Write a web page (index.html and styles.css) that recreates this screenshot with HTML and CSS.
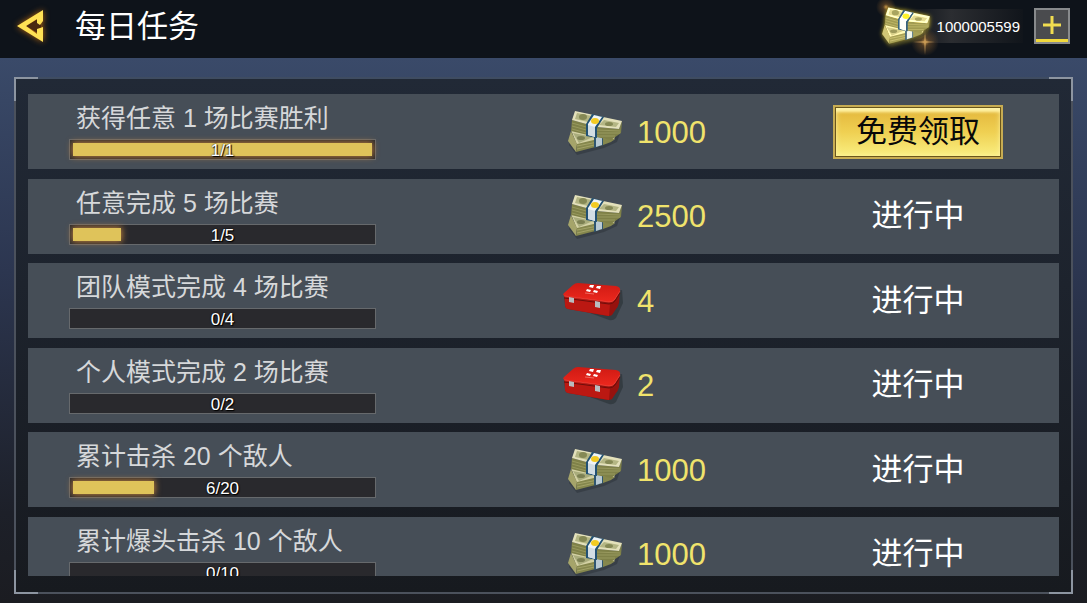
FILE: index.html
```html
<!DOCTYPE html>
<html lang="zh-CN">
<head>
  <meta charset="UTF-8" />
  <meta name="viewport" content="width=device-width, initial-scale=1.0"/>
  <title>每日任务</title>
  <link rel="stylesheet" href="styles.css">
</head>
<body>
  <!-- Shared icons -->
  <svg class="icon-defs" aria-hidden="true">
    <defs>
      <linearGradient id="lid" x1="0" y1="0" x2="0" y2="1">
        <stop offset="0" stop-color="#cf1a13"/>
        <stop offset="1" stop-color="#ec281e"/>
      </linearGradient>
      <radialGradient id="spark">
        <stop offset="0" stop-color="#e0a850" stop-opacity=".9"/>
        <stop offset=".3" stop-color="#a87030" stop-opacity=".4"/>
        <stop offset="1" stop-color="#a87030" stop-opacity="0"/>
      </radialGradient>
    </defs>
    <symbol id="cash" viewBox="0 1 70 56">
      <path d="M12 30 L60 30 L57 39 L44 45 L17 52 L9 42z" fill="#20262a" opacity=".35"/>
      <!-- lower bundle -->
      <path d="M11 27 L36 32 L55 33 L54 37 L17 42z" fill="#d3d1a4"/>
      <path d="M13 30 L33 34 L19 40z" fill="#a9ac7c"/>
      <ellipse cx="21" cy="35" rx="4" ry="2" fill="#7c8052"/>
      <path d="M11 28 L17 41 L16 49 L8 38z" fill="#a5a46a"/>
      <path d="M17 41 L42 35 L55 36 L51 39 L43 42 L16 49z" fill="#85874d"/>
      <path d="M17 43 L43 38 M17 46 L43 40" stroke="#a3a368"/>
      <path d="M34 34 L43 34 L43 42 L34 45z" fill="#2f5670"/>
      <path d="M36 34 L42 34 L42 42 L36 44z" fill="#b9cad3"/>
      <!-- upper bundle -->
      <path d="M12 17 L37 24 L59 26 L62 18 L61 30 L51 37 L36 34 L11 28z" fill="#7f8148"/>
      <path d="M12 20 L37 27 L60 28 M12 23 L37 30 L60 30 M12 26 L37 33 L55 33" fill="none" stroke="#98995e"/>
      <path d="M15 8 L62 18 L59 26 L37 24 L12 17z" fill="#e4e1bb"/>
      <path d="M17 10 L32 13 L28 19 L15 16z" fill="#b4b684"/>
      <path d="M44 17 L59 20 L56 24 L39 22z" fill="#b4b684"/>
      <ellipse cx="23" cy="14" rx="4" ry="3" fill="#858955"/>
      <ellipse cx="49" cy="21" rx="4" ry="2" fill="#858955"/>
      <path d="M32 11 L44 14 L37 25 L37 35 L26 33 L26 21z" fill="#235274"/>
      <path d="M34 12 L42 14 L35 24 L35 34 L28 32 L28 21z" fill="#eff4f6"/>
      <path d="M28 22 L35 24 L35 34 L28 32z" fill="#d2dde3"/>
      <ellipse cx="35" cy="18" rx="4" ry="3" fill="#f3cb22"/>
    </symbol>
    <symbol id="medkit" viewBox="4 0 70 56">
      <path d="M12 32 L53 47 Q57 48 60 45 L67 30 L66 17z" fill="#20272b" opacity=".45"/>
      <path d="M8 22 L55 28 L64 16 L63 30 Q62 34 60 36 L56 42 Q55 43 52 43 L12 36 Q9 35 9 32z" fill="#96120e"/>
      <path d="M9 23 L54 31 L53 43 L12 36 Q9 35 9 32z" fill="#bb1812"/>
      <path d="M17 12 Q19 10 22 10 L60 13 Q65 14 64 18 L59 26 Q57 29 53 29 L9 23 Q6 22 8 20z" fill="url(#lid)"/>
      <path d="M8 23 L53 29 Q57 29 59 26 L64 18" fill="none" stroke="#ff5046" opacity=".6"/>
      <path d="M8 25 L53 31 Q57 31 59 28 L64 20" fill="none" stroke="#6d0e0b"/>
      <path d="M13 24l5 1v5l-5-1z M39 28l5 1v6l-5-1z" fill="#b9bdc0"/>
      <path d="M34 12l4 0l-1 3l-4-1z M41 13l4 0l-1 3l-4-1z M31 16l4 1l-1 2l-4-1z M38 17l4 1l-1 2l-4-1z" fill="#fff"/>
      <path d="M29 20 L38 21" stroke="#f06a60"/>
    </symbol>
  </svg>

  <header class="topbar">
    <button type="button" class="back-btn" aria-label="返回">
      <svg viewBox="0 0 26 32" width="26" height="32">
        <path d="M9 16 L24 7 V25z" fill="#4a2810"/>
        <path d="M0 16 L26 0 V11 L23 15 L20 13 L20 9 L9 16 L20 24 L20 19 L26 17 V32z"/>
      </svg>
    </button>
    <h1>每日任务</h1>
    <div class="balance">
      <svg class="cash-icon" viewBox="0 0 62 50">
        <circle cx="11" cy="6" r="10" fill="url(#spark)"/>
        <circle cx="50" cy="41" r="14" fill="url(#spark)"/>
        <path d="M50 28 L51 40 L60 41 L51 42 L50 54 L49 42 L38 41 L49 40z" fill="#d8a860" opacity=".6"/>
        <g class="glow"><use href="#cash" width="62" height="50"/></g>
      </svg>
      <span>1000005599</span>
    </div>
    <button type="button" class="add-btn" aria-label="充值">
      <svg viewBox="0 0 18 18" width="18" height="18"><path d="M9 0V18M0 9H18"/></svg>
    </button>
  </header>

  <main class="panel">
    <div class="task-scroll">
      <ul class="task-list">
        <li class="task">
          <div class="info">
            <h2>获得任意 1 场比赛胜利</h2>
            <div class="bar"><div class="fill" style="width:100%"></div><span>1/1</span></div>
          </div>
          <div class="reward"><svg viewBox="0 0 70 56"><use href="#cash"/></svg><span>1000</span></div>
          <div class="status"><button type="button" class="claim-btn">免费领取</button></div>
        </li>
        <li class="task">
          <div class="info">
            <h2>任意完成 5 场比赛</h2>
            <div class="bar"><div class="fill" style="width:16%"></div><span>1/5</span></div>
          </div>
          <div class="reward"><svg viewBox="0 0 70 56"><use href="#cash"/></svg><span>2500</span></div>
          <div class="status">进行中</div>
        </li>
        <li class="task">
          <div class="info">
            <h2>团队模式完成 4 场比赛</h2>
            <div class="bar"><span>0/4</span></div>
          </div>
          <div class="reward"><svg viewBox="0 0 70 56"><use href="#medkit"/></svg><span>4</span></div>
          <div class="status">进行中</div>
        </li>
        <li class="task">
          <div class="info">
            <h2>个人模式完成 2 场比赛</h2>
            <div class="bar"><span>0/2</span></div>
          </div>
          <div class="reward"><svg viewBox="0 0 70 56"><use href="#medkit"/></svg><span>2</span></div>
          <div class="status">进行中</div>
        </li>
        <li class="task">
          <div class="info">
            <h2>累计击杀 20 个敌人</h2>
            <div class="bar"><div class="fill" style="width:27%"></div><span>6/20</span></div>
          </div>
          <div class="reward"><svg viewBox="0 0 70 56"><use href="#cash"/></svg><span>1000</span></div>
          <div class="status">进行中</div>
        </li>
        <li class="task">
          <div class="info">
            <h2>累计爆头击杀 10 个敌人</h2>
            <div class="bar"><span>0/10</span></div>
          </div>
          <div class="reward"><svg viewBox="0 0 70 56"><use href="#cash"/></svg><span>1000</span></div>
          <div class="status">进行中</div>
        </li>
      </ul>
    </div>
  </main>
</body>
</html>
```
FILE: styles.css
```css
* {
  box-sizing: border-box;
}
body {
  margin: 0;
  height: 100vh;
  display: flex;
  flex-direction: column;
  overflow: hidden;
  font-family: "Liberation Sans", "Noto Sans CJK SC", sans-serif;
  background: linear-gradient(#3a4a69 58px, #2c3650 45%, #1d2029 85%, #1b1c21);
  color: white;
}
h1, h2, ul {
  margin: 0;
  padding: 0;
  font-weight: 400;
}
button {
  font-family: inherit;
  cursor: pointer;
}
.icon-defs {
  position: absolute;
  width: 0;
  height: 0;
}

/* top bar */
.topbar {
  flex: none;
  height: 58px;
  display: flex;
  align-items: center;
  padding: 0 17px 6px;
  background: #0e131a;
}
.back-btn {
  display: flex;
  padding: 0;
  border: none;
  background: none;
}
.back-btn svg {
  fill: #ffe155;
  overflow: visible;
  filter: drop-shadow(0 0 3px #b96a10);
}
.topbar h1 {
  margin-left: 32px;
  padding-top: 2px;
  font-size: 31px;
  line-height: 48px;
}
.balance {
  display: flex;
  align-items: center;
  justify-content: flex-end;
  width: 144px;
  height: 34px;
  margin-left: auto;
  padding-right: 3px;
  background: linear-gradient(90deg, transparent 20%, #2b2d31 50%, #11151b);
  font-size: 15px;
}
.cash-icon {
  width: 62px;
  height: 50px;
  overflow: visible;
}
.glow {
  filter: drop-shadow(0 0 2px #a89a20) sepia(.3) saturate(1.3) brightness(1.15);
}
.add-btn {
  display: flex;
  align-items: center;
  justify-content: center;
  width: 36px;
  height: 36px;
  margin-left: 11px;
  padding: 0 0 3px;
  border: 2px solid #888a8c;
  background: #4a4b4e;
  box-shadow: inset 0 -3px #f0d83c;
}
.add-btn svg {
  fill: none;
  stroke: #f0dc50;
  stroke-width: 3;
}

/* panel with bright corners */
.panel {
  --corner: linear-gradient(#8d95a1, #8d95a1);
  flex: 1;
  min-height: 0;
  position: relative;
  display: flex;
  margin: 19px 14px 9px;
  padding: 15px 12px 16px;
  background: linear-gradient(#212936, #191d24 80%, #171a1f);
  border: 2px solid #4b515c;
  border-top-color: #3f4c61;
}
.panel::before {
  content: "";
  position: absolute;
  inset: -2px;
  pointer-events: none;
  background:
    var(--corner) 0 0 / 24px 2px,
    var(--corner) 0 0 / 2px 24px,
    var(--corner) 100% 0 / 24px 2px,
    var(--corner) 100% 0 / 2px 24px,
    var(--corner) 0 100% / 24px 2px,
    var(--corner) 0 100% / 2px 24px,
    var(--corner) 100% 100% / 24px 2px,
    var(--corner) 100% 100% / 2px 24px;
  background-repeat: no-repeat;
}
.task-scroll {
  flex: 1;
  overflow: hidden;
}
.task-list {
  display: flex;
  flex-direction: column;
  justify-content: space-between;
  height: 498px;
  list-style: none;
}
.task {
  display: grid;
  grid-template-columns: 1fr 217px 282px;
  align-items: center;
  height: 75px;
  background: #464e57;
}
.info {
  padding-left: 41px;
}
.info h2 {
  margin-bottom: 6px;
  padding-left: 7px;
  font-size: 25px;
  line-height: 30px;
  color: #d6d8da;
}
.bar {
  position: relative;
  width: 307px;
  height: 21px;
  padding: 3px;
  background: #29292d;
  border: 1px solid #66696c;
}
.fill {
  height: 13px;
  background: #dfc35a;
  box-shadow: 0 0 6px 1px #b77c3c;
}
.bar span {
  position: absolute;
  inset: 0;
  text-align: center;
  font-size: 17px;
  line-height: 21px;
  text-shadow: 0 0 2px #000, 1px 1px 1px #000;
}
.reward {
  display: flex;
  align-items: center;
  font-size: 31px;
  line-height: 40px;
  color: #f0e36c;
}
.reward svg {
  width: 70px;
  height: 56px;
  margin-right: 7px;
}
.reward span {
  padding-top: 2px;
}
.status {
  text-align: center;
  font-size: 31px;
  line-height: 40px;
}
.claim-btn {
  display: block;
  width: 170px;
  height: 54px;
  margin: 0 auto;
  padding: 0;
  font-size: 31px;
  line-height: 50px;
  color: #080808;
  border: 2px solid #c7ac52;
  background: linear-gradient(#e3b43a, #efd052 50%, #faf082);
  box-shadow: inset 0 0 0 1px #6a561c, inset 0 5px 3px #fff3a5, inset 0 0 6px #fff3a5;
}
```
